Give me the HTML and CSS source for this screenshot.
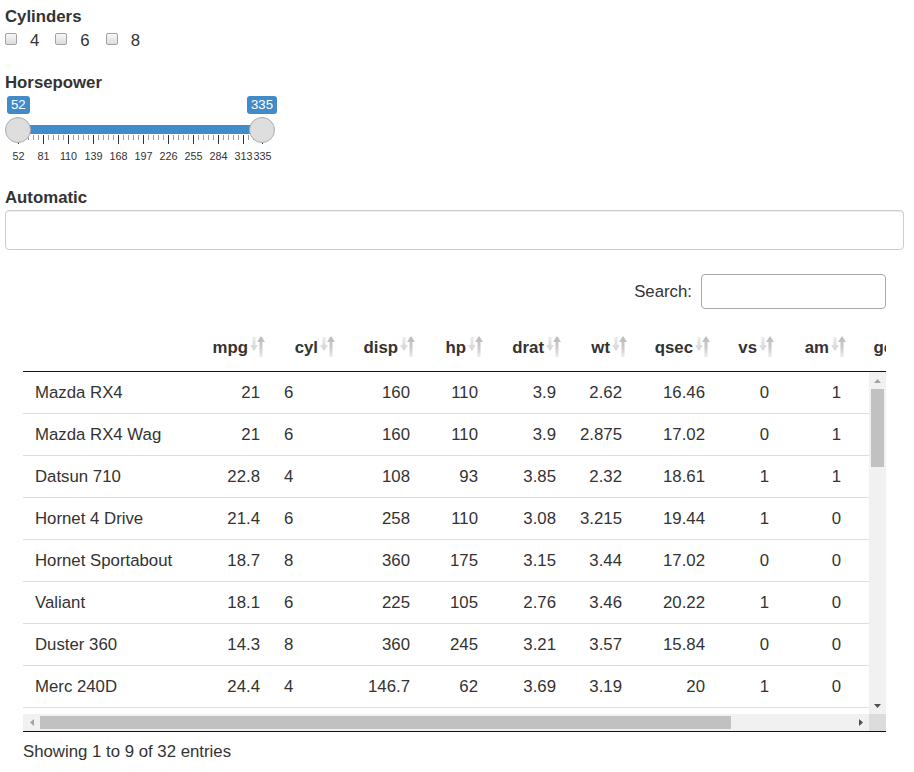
FILE: index.html
```html
<!DOCTYPE html>
<html>
<head>
<meta charset="utf-8">
<title>mtcars</title>
<link rel="stylesheet" href="styles.css">
</head>
<body>
<svg class="defs" width="0" height="0" aria-hidden="true">
  <defs>
    <linearGradient id="sortUp" x1="0" y1="0" x2="0" y2="1">
      <stop offset="0" stop-color="#b9b9b9"/>
      <stop offset="0.6" stop-color="#cdcdcd"/>
      <stop offset="1" stop-color="#ececec"/>
    </linearGradient>
    <linearGradient id="sortDown" x1="0" y1="0" x2="0" y2="1">
      <stop offset="0" stop-color="#ebebeb"/>
      <stop offset="1" stop-color="#d2d2d2"/>
    </linearGradient>
  </defs>
</svg>
<div class="page">
  <div class="form-group">
    <label class="ctl-label">Cylinders</label>
    <div class="checks">
      <label class="chk"><span class="box"></span><span>4</span></label>
      <label class="chk"><span class="box"></span><span>6</span></label>
      <label class="chk"><span class="box"></span><span>8</span></label>
    </div>
  </div>

  <div class="form-group">
    <label class="ctl-label">Horsepower</label>
    <div class="irs">
      <div class="irs-bar"></div>
      <span class="irs-label from">52</span>
      <span class="irs-label to">335</span>
      <div class="irs-grid">
        <div class="grid-minor"></div>
        <div class="grid-major"></div>
      </div>
      <div class="irs-nums">
        <span>52</span><span>81</span><span>110</span><span>139</span><span>168</span><span>197</span><span>226</span><span>255</span><span>284</span><span>313</span><span class="last">335</span>
      </div>
      <span class="irs-handle h-left"></span>
      <span class="irs-handle h-right"></span>
    </div>
  </div>

  <div class="form-group">
    <label class="ctl-label">Automatic</label>
    <div class="selectize"></div>
  </div>

  <div class="dt">
    <div class="dt-filter">
      <label>Search:</label>
      <span class="search"></span>
    </div>

    <div class="dt-head">
      <table>
        <colgroup>
          <col class="c-name"><col class="c-mpg"><col class="c-cyl"><col class="c-disp"><col class="c-hp"><col class="c-drat"><col class="c-wt"><col class="c-qsec"><col class="c-vs"><col class="c-am"><col class="c-gear"><col class="c-carb">
        </colgroup>
        <thead>
          <tr>
            <th class="blank"></th>
            <th>mpg<svg class="sort" viewBox="0 0 16 22" width="16" height="22"><path d="M2.5 1h3v8H8l-4 6-4-6h2.5z" fill="url(#sortDown)"/><path d="M11 0l4 6h-2.5v15h-3V6H7z" fill="url(#sortUp)"/></svg></th>
            <th>cyl<svg class="sort" viewBox="0 0 16 22" width="16" height="22"><path d="M2.5 1h3v8H8l-4 6-4-6h2.5z" fill="url(#sortDown)"/><path d="M11 0l4 6h-2.5v15h-3V6H7z" fill="url(#sortUp)"/></svg></th>
            <th>disp<svg class="sort" viewBox="0 0 16 22" width="16" height="22"><path d="M2.5 1h3v8H8l-4 6-4-6h2.5z" fill="url(#sortDown)"/><path d="M11 0l4 6h-2.5v15h-3V6H7z" fill="url(#sortUp)"/></svg></th>
            <th>hp<svg class="sort" viewBox="0 0 16 22" width="16" height="22"><path d="M2.5 1h3v8H8l-4 6-4-6h2.5z" fill="url(#sortDown)"/><path d="M11 0l4 6h-2.5v15h-3V6H7z" fill="url(#sortUp)"/></svg></th>
            <th>drat<svg class="sort" viewBox="0 0 16 22" width="16" height="22"><path d="M2.5 1h3v8H8l-4 6-4-6h2.5z" fill="url(#sortDown)"/><path d="M11 0l4 6h-2.5v15h-3V6H7z" fill="url(#sortUp)"/></svg></th>
            <th>wt<svg class="sort" viewBox="0 0 16 22" width="16" height="22"><path d="M2.5 1h3v8H8l-4 6-4-6h2.5z" fill="url(#sortDown)"/><path d="M11 0l4 6h-2.5v15h-3V6H7z" fill="url(#sortUp)"/></svg></th>
            <th>qsec<svg class="sort" viewBox="0 0 16 22" width="16" height="22"><path d="M2.5 1h3v8H8l-4 6-4-6h2.5z" fill="url(#sortDown)"/><path d="M11 0l4 6h-2.5v15h-3V6H7z" fill="url(#sortUp)"/></svg></th>
            <th>vs<svg class="sort" viewBox="0 0 16 22" width="16" height="22"><path d="M2.5 1h3v8H8l-4 6-4-6h2.5z" fill="url(#sortDown)"/><path d="M11 0l4 6h-2.5v15h-3V6H7z" fill="url(#sortUp)"/></svg></th>
            <th>am<svg class="sort" viewBox="0 0 16 22" width="16" height="22"><path d="M2.5 1h3v8H8l-4 6-4-6h2.5z" fill="url(#sortDown)"/><path d="M11 0l4 6h-2.5v15h-3V6H7z" fill="url(#sortUp)"/></svg></th>
            <th>gear<svg class="sort" viewBox="0 0 16 22" width="16" height="22"><path d="M2.5 1h3v8H8l-4 6-4-6h2.5z" fill="url(#sortDown)"/><path d="M11 0l4 6h-2.5v15h-3V6H7z" fill="url(#sortUp)"/></svg></th>
            <th>carb<svg class="sort" viewBox="0 0 16 22" width="16" height="22"><path d="M2.5 1h3v8H8l-4 6-4-6h2.5z" fill="url(#sortDown)"/><path d="M11 0l4 6h-2.5v15h-3V6H7z" fill="url(#sortUp)"/></svg></th>
          </tr>
        </thead>
      </table>
    </div>

    <div class="dt-body">
      <div class="viewport">
        <table>
          <colgroup>
            <col class="c-name"><col class="c-mpg"><col class="c-cyl"><col class="c-disp"><col class="c-hp"><col class="c-drat"><col class="c-wt"><col class="c-qsec"><col class="c-vs"><col class="c-am"><col class="c-gear"><col class="c-carb">
          </colgroup>
          <tbody>
            <tr><td class="l">Mazda RX4</td><td>21</td><td class="l">6</td><td>160</td><td>110</td><td>3.9</td><td>2.62</td><td>16.46</td><td>0</td><td>1</td><td>4</td><td>4</td></tr>
            <tr><td class="l">Mazda RX4 Wag</td><td>21</td><td class="l">6</td><td>160</td><td>110</td><td>3.9</td><td>2.875</td><td>17.02</td><td>0</td><td>1</td><td>4</td><td>4</td></tr>
            <tr><td class="l">Datsun 710</td><td>22.8</td><td class="l">4</td><td>108</td><td>93</td><td>3.85</td><td>2.32</td><td>18.61</td><td>1</td><td>1</td><td>4</td><td>1</td></tr>
            <tr><td class="l">Hornet 4 Drive</td><td>21.4</td><td class="l">6</td><td>258</td><td>110</td><td>3.08</td><td>3.215</td><td>19.44</td><td>1</td><td>0</td><td>3</td><td>1</td></tr>
            <tr><td class="l">Hornet Sportabout</td><td>18.7</td><td class="l">8</td><td>360</td><td>175</td><td>3.15</td><td>3.44</td><td>17.02</td><td>0</td><td>0</td><td>3</td><td>2</td></tr>
            <tr><td class="l">Valiant</td><td>18.1</td><td class="l">6</td><td>225</td><td>105</td><td>2.76</td><td>3.46</td><td>20.22</td><td>1</td><td>0</td><td>3</td><td>1</td></tr>
            <tr><td class="l">Duster 360</td><td>14.3</td><td class="l">8</td><td>360</td><td>245</td><td>3.21</td><td>3.57</td><td>15.84</td><td>0</td><td>0</td><td>3</td><td>4</td></tr>
            <tr><td class="l">Merc 240D</td><td>24.4</td><td class="l">4</td><td>146.7</td><td>62</td><td>3.69</td><td>3.19</td><td>20</td><td>1</td><td>0</td><td>4</td><td>2</td></tr>
            <tr><td class="l">Merc 230</td><td>22.8</td><td class="l">4</td><td>140.8</td><td>95</td><td>3.92</td><td>3.15</td><td>22.9</td><td>1</td><td>0</td><td>4</td><td>2</td></tr>
          </tbody>
        </table>
      </div>
      <div class="vscroll">
        <span class="sb-btn"><svg width="7" height="4" viewBox="0 0 7 4"><path d="M3.5 0L7 4H0z" fill="#a3a3a3"/></svg></span>
        <span class="vthumb"></span>
        <span class="spacer"></span>
        <span class="sb-btn"><svg width="7" height="4" viewBox="0 0 7 4"><path d="M0 0h7L3.5 4z" fill="#505050"/></svg></span>
      </div>
      <div class="hscroll">
        <span class="sb-btn"><svg width="4" height="7" viewBox="0 0 4 7"><path d="M4 0v7L0 3.5z" fill="#a3a3a3"/></svg></span>
        <span class="hthumb"></span>
        <span class="spacer"></span>
        <span class="sb-btn"><svg width="4" height="7" viewBox="0 0 4 7"><path d="M0 0l4 3.5L0 7z" fill="#505050"/></svg></span>
      </div>
      <div class="corner"></div>
    </div>

    <div class="dt-info">Showing 1 to 9 of 32 entries</div>
  </div>
</div>
</body>
</html>
```

FILE: styles.css
```css
body {
  margin: 0;
  font-family: "Liberation Sans", Arial, Helvetica, sans-serif;
  font-size: 16.8px;
  line-height: 24px;
  color: #333;
  background: #fff;
}

.defs {
  position: absolute;
  width: 0;
  height: 0;
  overflow: hidden;
}

.page {
  padding: 5px 10px 0 5px;
  width: 899px;
}

.form-group {
  margin-bottom: 18px;
}

.ctl-label {
  display: block;
  font-weight: bold;
}

/* checkboxes */
.checks {
  display: flex;
}

.chk {
  display: flex;
  align-items: flex-start;
  margin-right: 16px;
}

.box {
  width: 12px;
  height: 12px;
  margin-top: 4px;
  margin-right: 13px;
  box-sizing: border-box;
  border: 1px solid #a2a2a2;
  border-radius: 2px;
  background: linear-gradient(#f7f7f7, #dcdcdc);
}

/* range slider */
.irs {
  position: relative;
  width: 290px;
  height: 73px;
}

.irs-bar {
  position: absolute;
  left: 13px;
  top: 30px;
  width: 244px;
  height: 9px;
  background: #428bca;
}

.irs-label {
  position: absolute;
  top: 1px;
  height: 18px;
  line-height: 18px;
  padding: 0 4px;
  font-size: 13.2px;
  color: #fff;
  background: #428bca;
  border-radius: 3px;
}

.irs-label.from {
  left: 2px;
}

.irs-label.to {
  left: 242px;
}

.irs-grid {
  position: absolute;
  left: 13px;
  top: 40px;
  width: 246px;
  height: 9px;
}

.grid-minor {
  position: absolute;
  left: 0;
  top: 0;
  width: 241px;
  height: 5px;
  background: repeating-linear-gradient(90deg, #9c9c9c 0 1px, transparent 1px 5px);
}

.grid-major {
  position: absolute;
  left: 0;
  top: 0;
  width: 226px;
  height: 9px;
  background: repeating-linear-gradient(90deg, #333 0 1px, transparent 1px 25px);
}

.grid-major::after {
  content: "";
  position: absolute;
  left: 244px;
  top: 0;
  width: 1px;
  height: 9px;
  background: #333;
}

.irs-nums {
  position: absolute;
  left: 1px;
  top: 55px;
  display: flex;
  font-size: 10.8px;
  line-height: 12px;
  color: #333;
}

.irs-nums span {
  width: 25px;
  text-align: center;
}

.irs-nums .last {
  margin-left: -6px;
}

.irs-handle {
  position: absolute;
  top: 22px;
  width: 26px;
  height: 26px;
  box-sizing: border-box;
  border-radius: 50%;
  background: #dedede;
  border: 1px solid #ababab;
}

.h-left {
  left: 0;
}

.h-right {
  left: 244px;
}

/* selectize */
.selectize {
  height: 40px;
  box-sizing: border-box;
  border: 1px solid #ccc;
  border-radius: 4px;
  box-shadow: inset 0 1px 1px rgba(0, 0, 0, 0.075);
}

/* datatable */
.dt {
  margin-left: 18px;
  margin-top: 24px;
  width: 863px;
}

.dt-filter {
  display: flex;
  justify-content: flex-end;
  align-items: center;
  gap: 9px;
  height: 35px;
}

.search {
  width: 185px;
  height: 35px;
  box-sizing: border-box;
  border: 1px solid #aaa;
  border-radius: 4px;
}

.dt table {
  table-layout: fixed;
  border-collapse: collapse;
  width: 980px;
}

.c-name { width: 177px; }
.c-mpg { width: 72px; }
.c-cyl { width: 70px; }
.c-disp { width: 80px; }
.c-hp { width: 68px; }
.c-drat { width: 78px; }
.c-wt { width: 66px; }
.c-qsec { width: 83px; }
.c-vs { width: 64px; }
.c-am { width: 72px; }
.c-gear { width: 80px; }
.c-carb { width: 70px; }

.dt-head {
  margin-top: 16px;
  overflow: hidden;
}

.dt-head th {
  font-weight: bold;
  text-align: right;
  height: 24px;
  padding: 11px 6px 11px 12px;
  border-bottom: 1px solid #111;
  white-space: nowrap;
  overflow: hidden;
}

.sort {
  display: inline-block;
  vertical-align: -5px;
  margin-left: 2px;
}

.dt-body {
  display: grid;
  grid-template-columns: 846px 17px;
  grid-template-rows: 342px 17px;
  border-bottom: 1px solid #111;
}

.viewport {
  overflow: hidden;
}

.viewport td {
  padding: 9px 12px 8px;
  border-bottom: 1px solid #ddd;
  text-align: right;
  white-space: nowrap;
}

.viewport td.l {
  text-align: left;
}

.vscroll {
  background: #f1f1f1;
  display: flex;
  flex-direction: column;
  align-items: center;
}

.hscroll {
  background: #f1f1f1;
  display: flex;
  align-items: center;
}

.sb-btn {
  width: 17px;
  height: 17px;
  flex: none;
  display: flex;
  align-items: center;
  justify-content: center;
}

.spacer {
  flex: 1;
}

.vthumb {
  width: 13px;
  height: 78px;
  background: #c1c1c1;
}

.hthumb {
  width: 691px;
  height: 13px;
  background: #c1c1c1;
}

.corner {
  background: #dcdcdc;
}

.dt-info {
  margin-top: 8px;
}
```
